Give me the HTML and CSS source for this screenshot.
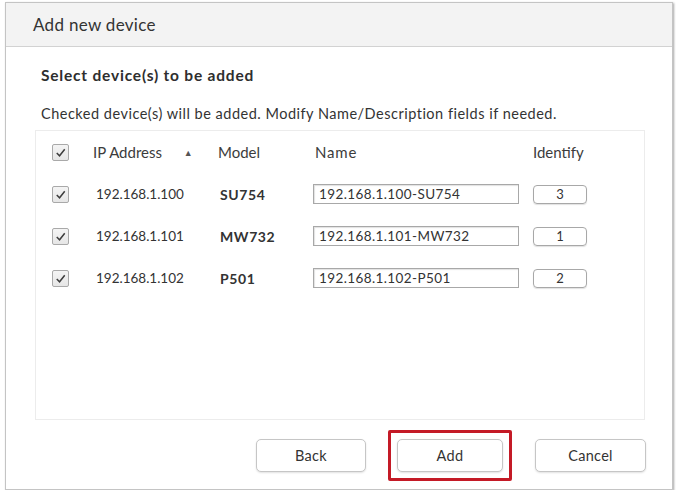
FILE: index.html
```html
<!DOCTYPE html>
<html lang="en">
<head>
    <meta charset="UTF-8">
    <title>Add new device</title>
    <link rel="stylesheet" href="styles.css">
</head>

<body>
    <section class="dialog">
        <header class="dialog-head">
            <h1>Add new device</h1>
        </header>

        <div class="dialog-body">
            <h2>Select device(s) to be added</h2>
            <p class="hint">Checked device(s) will be added. Modify Name/Description fields if needed.</p>

            <div class="device-box">
                <div class="row head-row">
                    <span class="check"><svg viewBox="0 0 16 16"><path d="M4 8.5 L7 11.5 L12.5 4.5"/></svg></span>
                    <span class="ip-head">IP Address <span class="sort">&#9650;</span></span>
                    <span>Model</span>
                    <span class="name-head">Name</span>
                    <span>Identify</span>
                </div>

                <div class="row">
                    <span class="check"><svg viewBox="0 0 16 16"><path d="M4 8.5 L7 11.5 L12.5 4.5"/></svg></span>
                    <span class="ip">192.168.1.100</span>
                    <span class="model">SU754</span>
                    <span class="name-field">192.168.1.100-SU754</span>
                    <span class="identify">3</span>
                </div>

                <div class="row">
                    <span class="check"><svg viewBox="0 0 16 16"><path d="M4 8.5 L7 11.5 L12.5 4.5"/></svg></span>
                    <span class="ip">192.168.1.101</span>
                    <span class="model">MW732</span>
                    <span class="name-field">192.168.1.101-MW732</span>
                    <span class="identify">1</span>
                </div>

                <div class="row">
                    <span class="check"><svg viewBox="0 0 16 16"><path d="M4 8.5 L7 11.5 L12.5 4.5"/></svg></span>
                    <span class="ip">192.168.1.102</span>
                    <span class="model">P501</span>
                    <span class="name-field">192.168.1.102-P501</span>
                    <span class="identify">2</span>
                </div>
            </div>

            <div class="actions">
                <button class="btn btn-back">Back</button>
                <span class="highlight"><button class="btn btn-add">Add</button></span>
                <button class="btn btn-cancel">Cancel</button>
            </div>
        </div>
    </section>
</body>
</html>
```

FILE: styles.css
```css
* {
    box-sizing: border-box;
}

body {
    margin: 0;
    background: #fff;
    font-family: Lato, "Open Sans", sans-serif;
    color: #333;
}

.dialog {
    margin: 2px 0 0 5px;
    width: 668px;
    height: 488px;
    border: 1px solid #c4c4c4;
    box-shadow: 1px 1px 2px rgba(0, 0, 0, 0.35);
    background: #fff;
}

.dialog-head {
    height: 44px;
    background: #f3f3f3;
    border-bottom: 1px solid #d2d2d2;
    padding-left: 27px;
    display: flex;
    align-items: center;
}

h1 {
    margin: 0;
    font-size: 17px;
    font-weight: normal;
    letter-spacing: 0.3px;
    color: #333;
}

.dialog-body {
    padding: 19px 0 0 29px;
}

h2 {
    margin: 0 0 0 6px;
    font-size: 15.5px;
    line-height: 18px;
    font-weight: bold;
    letter-spacing: 0.8px;
    color: #2e2e2e;
}

.hint {
    margin: 21px 0 0 6px;
    font-size: 14.5px;
    line-height: 18px;
    letter-spacing: 0.5px;
    color: #333;
}

.device-box {
    margin-top: 7px;
    width: 610px;
    height: 290px;
    border: 1px solid #ececec;
}

.row {
    display: grid;
    grid-template-columns: 41px 125px 95px 220px 54px;
    align-items: center;
    height: 42px;
    padding-left: 16px;
    font-size: 13.5px;
    color: #333;
}

.head-row {
    font-size: 15px;
    color: #3c3c3c;
}

.check {
    width: 17px;
    height: 17px;
    border: 1px solid #a9a9a9;
    border-radius: 2px;
    background: linear-gradient(#f4f4f4, #e6e6e6);
}

.check svg {
    display: block;
    width: 15px;
    height: 15px;
    fill: none;
    stroke: #3d3d3d;
    stroke-width: 1.6;
}

.sort {
    font-size: 9px;
    color: #555;
    margin-left: 18px;
    vertical-align: 2px;
}

.ip {
    padding-left: 3px;
}

.model {
    font-weight: bold;
    font-size: 14px;
    letter-spacing: 0.6px;
    padding-left: 2px;
}

.name-head {
    padding-left: 2px;
    letter-spacing: 0.8px;
}

.name-field {
    width: 206px;
    height: 20px;
    border: 1px solid #a8a8a8;
    box-shadow: inset 1px 1px 1px rgba(0, 0, 0, 0.12);
    padding: 1px 0 0 5px;
    font-size: 13.5px;
    line-height: 17px;
    letter-spacing: 0.4px;
}

.identify {
    width: 54px;
    height: 19px;
    border: 1px solid #a8a8a8;
    border-radius: 4px;
    text-align: center;
    font-size: 13px;
    line-height: 17px;
    box-shadow: 0 1px 1px rgba(0, 0, 0, 0.12);
}

.actions {
    display: flex;
    justify-content: flex-end;
    align-items: center;
    gap: 22px;
    width: 611px;
    margin-top: 10px;
}

.btn {
    height: 33px;
    border: 1px solid #c6c6c6;
    border-radius: 5px;
    background: #fff;
    box-shadow: 0 1px 2px rgba(0, 0, 0, 0.12);
    font-family: Lato, "Open Sans", sans-serif;
    font-size: 14.5px;
    letter-spacing: 0.3px;
    color: #333;
}

.btn-back {
    width: 110px;
}

.btn-add {
    display: block;
    width: 106px;
}

.btn-cancel {
    width: 111px;
    margin-left: 1px;
}

.highlight {
    display: block;
    border: 3px solid #c41a26;
    border-radius: 2px;
    padding: 6px;
}
```
